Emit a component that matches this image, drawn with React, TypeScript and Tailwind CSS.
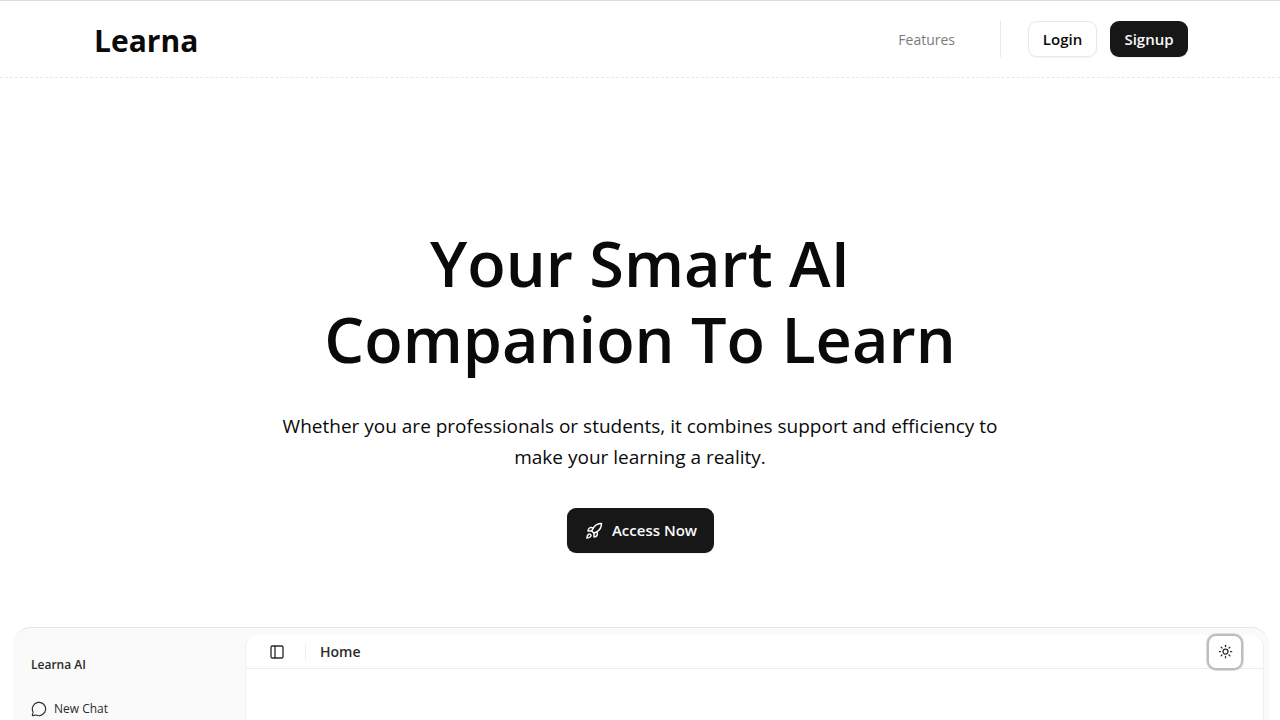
import { MessageCircle, PanelLeft, Rocket, Sun } from "lucide-react";

function Header() {
  return (
    <header className="border-t border-b border-t-[#dedede] border-b-[#e8e8e8] [border-bottom-style:dashed]">
      <div className="mx-auto flex items-center justify-between px-[92px] py-5">
        <a href="#" className="pt-1 pl-[2px] text-[30px] leading-8 font-bold">
          Learna
        </a>
        <nav className="flex h-9 items-center">
          <a href="#features" className="text-[14px] text-[#7b7b7b]">
            Features
          </a>
          <span className="ml-[45px] h-9 w-px bg-[#e8e8e8]" />
          <button
            type="button"
            className="ml-[27px] h-9 w-[69px] rounded-[9px] border border-[#e8e8e8] bg-white text-[15px] font-semibold shadow-xs"
          >
            Login
          </button>
          <button
            type="button"
            className="ml-[13px] h-9 w-[78px] rounded-[9px] bg-[#171717] text-[15px] font-semibold text-[#fafafa] shadow-xs"
          >
            Signup
          </button>
        </nav>
      </div>
    </header>
  );
}

function Hero() {
  return (
    <section className="flex flex-col items-center px-6 pt-[147px] text-center">
      <h1 className="max-w-[740px] text-[63px] leading-[76px] font-semibold">
        Your Smart AI
        <br />
        Companion To Learn
      </h1>
      <p className="mt-[34px] max-w-[760px] text-[19px] leading-[31px]">
        Whether you are professionals or students, it combines support and efficiency to
        <br />
        make your learning a reality.
      </p>
      <button
        type="button"
        className="mt-[35px] flex h-[45px] w-[147px] items-center justify-center gap-[9px] rounded-[9px] bg-[#171717] pl-[2px] text-[15px] font-semibold text-[#fafafa] shadow-xs"
      >
        <Rocket size={18} />
        Access Now
      </button>
    </section>
  );
}

function AppPreview() {
  return (
    <section className="mr-[11px] ml-[13px] mt-[74px] flex flex-1 rounded-t-[18px] border-t border-[#e5e5e5] bg-[#fafafa] pr-[5px] text-[#2b2b2b]">
      <aside className="w-[232px] shrink-0 pt-[27px] pl-[18px]">
        <h2 className="text-[12px] leading-5 font-semibold">Learna AI</h2>
        <a href="#chat" className="mt-6 flex items-center gap-[7px] text-[12px] leading-5">
          <MessageCircle size={16} strokeWidth={1.7} />
          New Chat
        </a>
      </aside>
      <div className="mt-[7px] flex-1 rounded-t-xl border-x border-[#f0f0f0] bg-white">
        <div className="flex h-[34px] items-center border-b border-[#ececec] pr-5 pl-[23px]">
          <button type="button" aria-label="Toggle sidebar">
            <PanelLeft size={16} />
          </button>
          <span className="ml-5 h-4 w-px bg-[#ececec]" />
          <h2 className="ml-[14px] text-[14px] font-semibold">Home</h2>
          <button
            type="button"
            aria-label="Toggle theme"
            className="ml-auto flex h-9 w-9 items-center justify-center rounded-[9px] border-2 border-[#bdbdbd] bg-white shadow-[0_0_0_1px_#dcdcdc]"
          >
            <Sun size={15} />
          </button>
        </div>
      </div>
    </section>
  );
}

export default function App() {
  return (
    <div className="flex h-screen flex-col overflow-hidden bg-white font-['Open_Sans','Noto_Sans',sans-serif] text-[#0a0a0a]">
      <Header />
      <main className="flex flex-1 flex-col">
        <Hero />
        <AppPreview />
      </main>
    </div>
  );
}
